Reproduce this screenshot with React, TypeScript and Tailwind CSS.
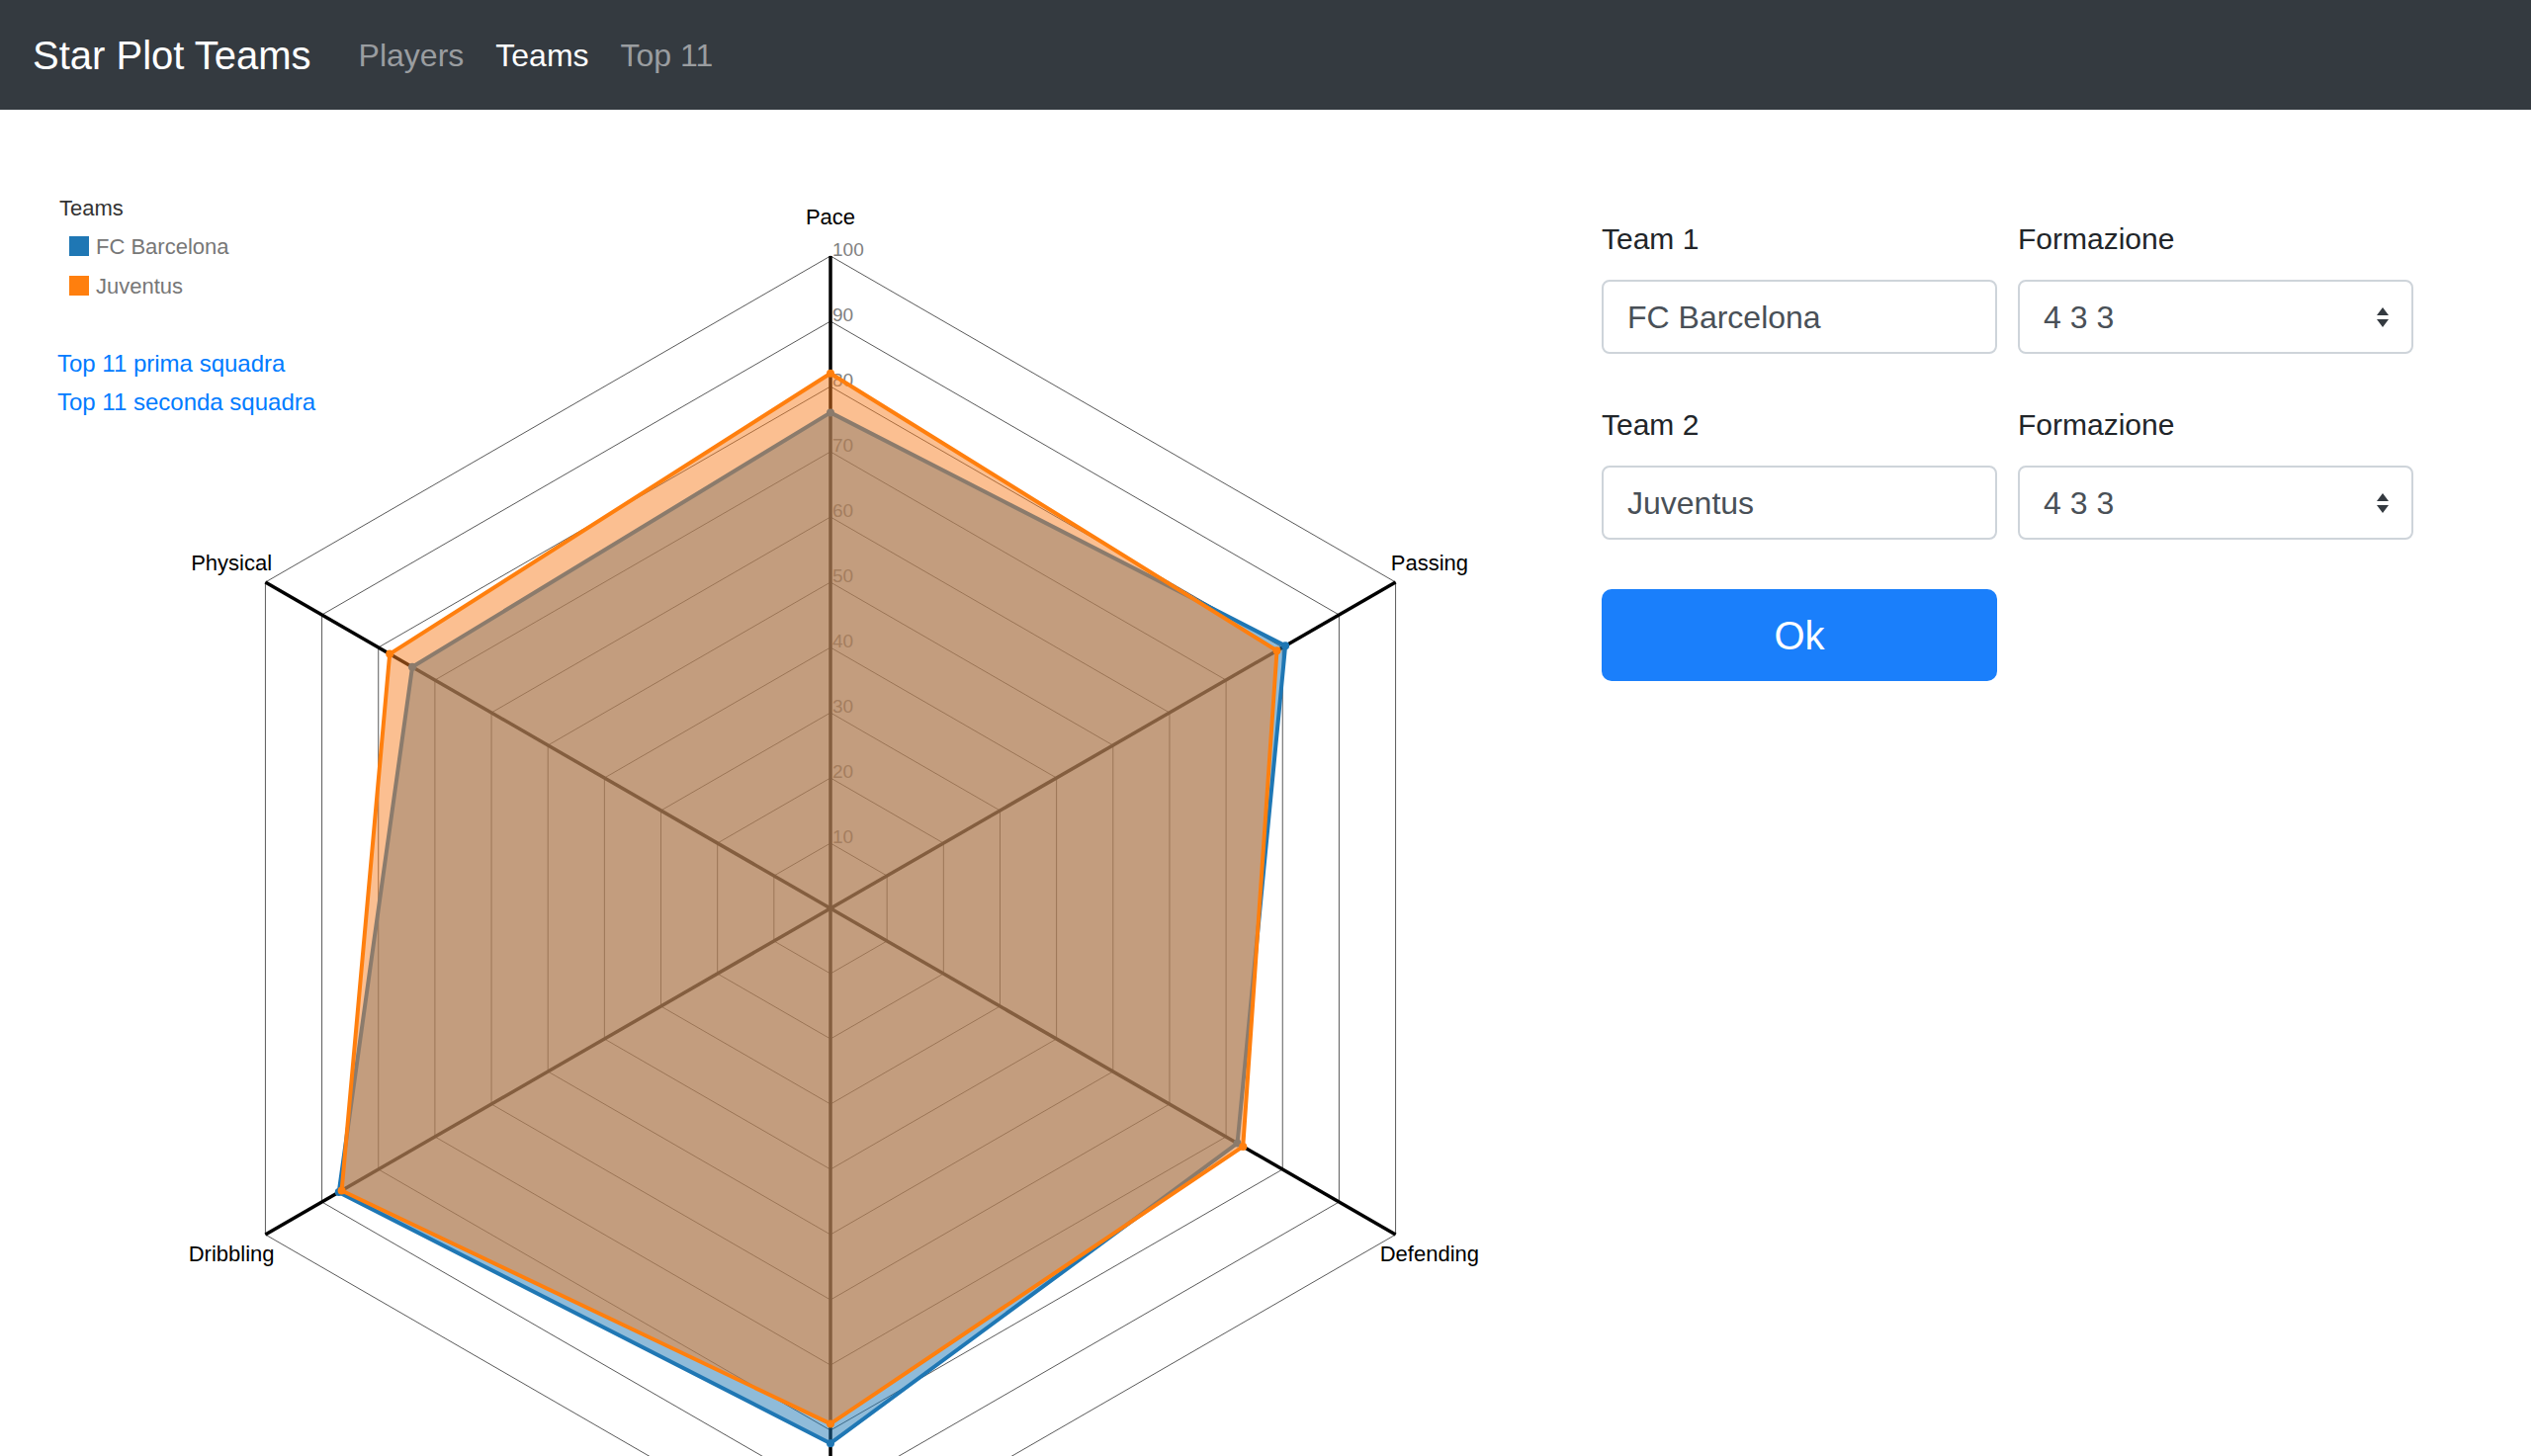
import React from "react"

const font = { fontFamily: '"Liberation Sans", Arial, sans-serif' }

const axes = ["Pace", "Passing", "Defending", "Shooting", "Dribbling", "Physical"]

const teams = [
  { name: "FC Barcelona", color: "#1f77b4", fill: "#1f77b4", values: [76, 80.5, 72, 82, 87, 74] },
  { name: "Juventus", color: "#ff7f0e", fill: "#f77f23", values: [82, 79, 73, 79, 86.5, 78] },
]

const CX = 840
const CY = 808
const R = 660

function pt(i: number, r: number): [number, number] {
  const a = (i * Math.PI) / 3
  return [CX + r * Math.sin(a), CY - r * Math.cos(a)]
}

function poly(vals: number[]) {
  return vals.map((v, i) => pt(i, (R * v) / 100).join(",")).join(" ")
}

function StarPlot() {
  const levels = [1, 2, 3, 4, 5, 6, 7, 8, 9, 10]
  return (
    <svg width={1620} height={1650} style={font}>
      {/* legend */}
      <text x={60} y={107} fontSize={22} fill="#333">
        Teams
      </text>
      {teams.map((t, i) => (
        <g key={t.name}>
          <rect x={70} y={128 + i * 40} width={20} height={20} fill={t.color} />
          <text x={97} y={146 + i * 40} fontSize={22} fill="#777">
            {t.name}
          </text>
        </g>
      ))}

      {/* grid */}
      {levels.map((l) => (
        <polygon
          key={l}
          points={poly(axes.map(() => l * 10))}
          fill="none"
          stroke="#5a5a5a"
          strokeWidth={1}
        />
      ))}

      {/* axes */}
      {axes.map((a, i) => {
        const [x, y] = pt(i, R)
        return <line key={a} x1={CX} y1={CY} x2={x} y2={y} stroke="#000" strokeWidth={3.5} />
      })}

      {/* ticks */}
      {levels.map((l) => (
        <text key={l} x={842} y={CY - (R * l) / 10} fontSize={19} fill="#808080">
          {l * 10}
        </text>
      ))}

      {/* labels */}
      {axes.map((a, i) => {
        const [x, y] = pt(i, R * 1.06)
        return (
          <text key={a} x={x} y={y} fontSize={22} fill="#000" textAnchor="middle" dominantBaseline="central">
            {a}
          </text>
        )
      })}

      {/* teams */}
      {teams.map((t) => (
        <g key={t.name}>
          <polygon
            points={poly(t.values)}
            fill={t.fill}
            fillOpacity={0.5}
            stroke={t.color}
            strokeWidth={4}
            strokeLinejoin="round"
          />
          {t.values.map((v, i) => {
            const [x, y] = pt(i, (R * v) / 100)
            return <circle key={i} cx={x} cy={y} r={4} fill={t.color} />
          })}
        </g>
      ))}
    </svg>
  )
}

function Arrows() {
  return (
    <svg width="14" height="22" viewBox="0 0 14 22">
      <path d="M7 1 L13 9 L1 9 Z" fill="#343a40" />
      <path d="M7 21 L13 13 L1 13 Z" fill="#343a40" />
    </svg>
  )
}

function Field({ label, value }: { label: string; value: string }) {
  return (
    <div className="flex flex-col">
      <label className="text-[30px] leading-[48px] text-[#212529] mb-[17px]">{label}</label>
      <div className="h-[75px] border-2 border-[#ced4da] rounded-[8px] px-[24px] flex items-center text-[32px] text-[#495057] bg-white">
        {value}
      </div>
    </div>
  )
}

function SelectField({ label, value }: { label: string; value: string }) {
  return (
    <div className="flex flex-col">
      <label className="text-[30px] leading-[48px] text-[#212529] mb-[17px]">{label}</label>
      <div className="h-[75px] border-2 border-[#ced4da] rounded-[8px] pl-[24px] pr-[22px] flex items-center justify-between text-[32px] text-[#495057] bg-white">
        <span>{value}</span>
        <Arrows />
      </div>
    </div>
  )
}

export default function App() {
  return (
    <div className="min-h-screen bg-white" style={font}>
      <nav className="h-[111px] bg-[#343a40] flex items-center px-[33px]">
        <span className="text-[40px] text-white mr-[32px]">Star Plot Teams</span>
        <div className="flex text-[32px]">
          <a className="px-[16px] text-[#9a9da0]">Players</a>
          <a className="px-[16px] text-white">Teams</a>
          <a className="px-[16px] text-[#9a9da0]">Top 11</a>
        </div>
      </nav>

      <main className="flex">
        <div className="relative w-[1620px] shrink-0">
          <StarPlot />
          <div className="absolute left-[58px] top-[237px] flex flex-col text-[24px] leading-[39px] text-[#007bff]">
            <a>Top 11 prima squadra</a>
            <a>Top 11 seconda squadra</a>
          </div>
        </div>

        <div className="pt-[107px] w-[820px]">
          <div className="grid grid-cols-[400px_400px] gap-x-[21px] gap-y-[48px]">
            <Field label="Team 1" value="FC Barcelona" />
            <SelectField label="Formazione" value="4 3 3" />
            <Field label="Team 2" value="Juventus" />
            <SelectField label="Formazione" value="4 3 3" />
          </div>
          <button className="mt-[50px] w-[400px] h-[93px] rounded-[10px] bg-[#1a7ffb] text-white text-[40px]">
            Ok
          </button>
        </div>
      </main>
    </div>
  )
}
